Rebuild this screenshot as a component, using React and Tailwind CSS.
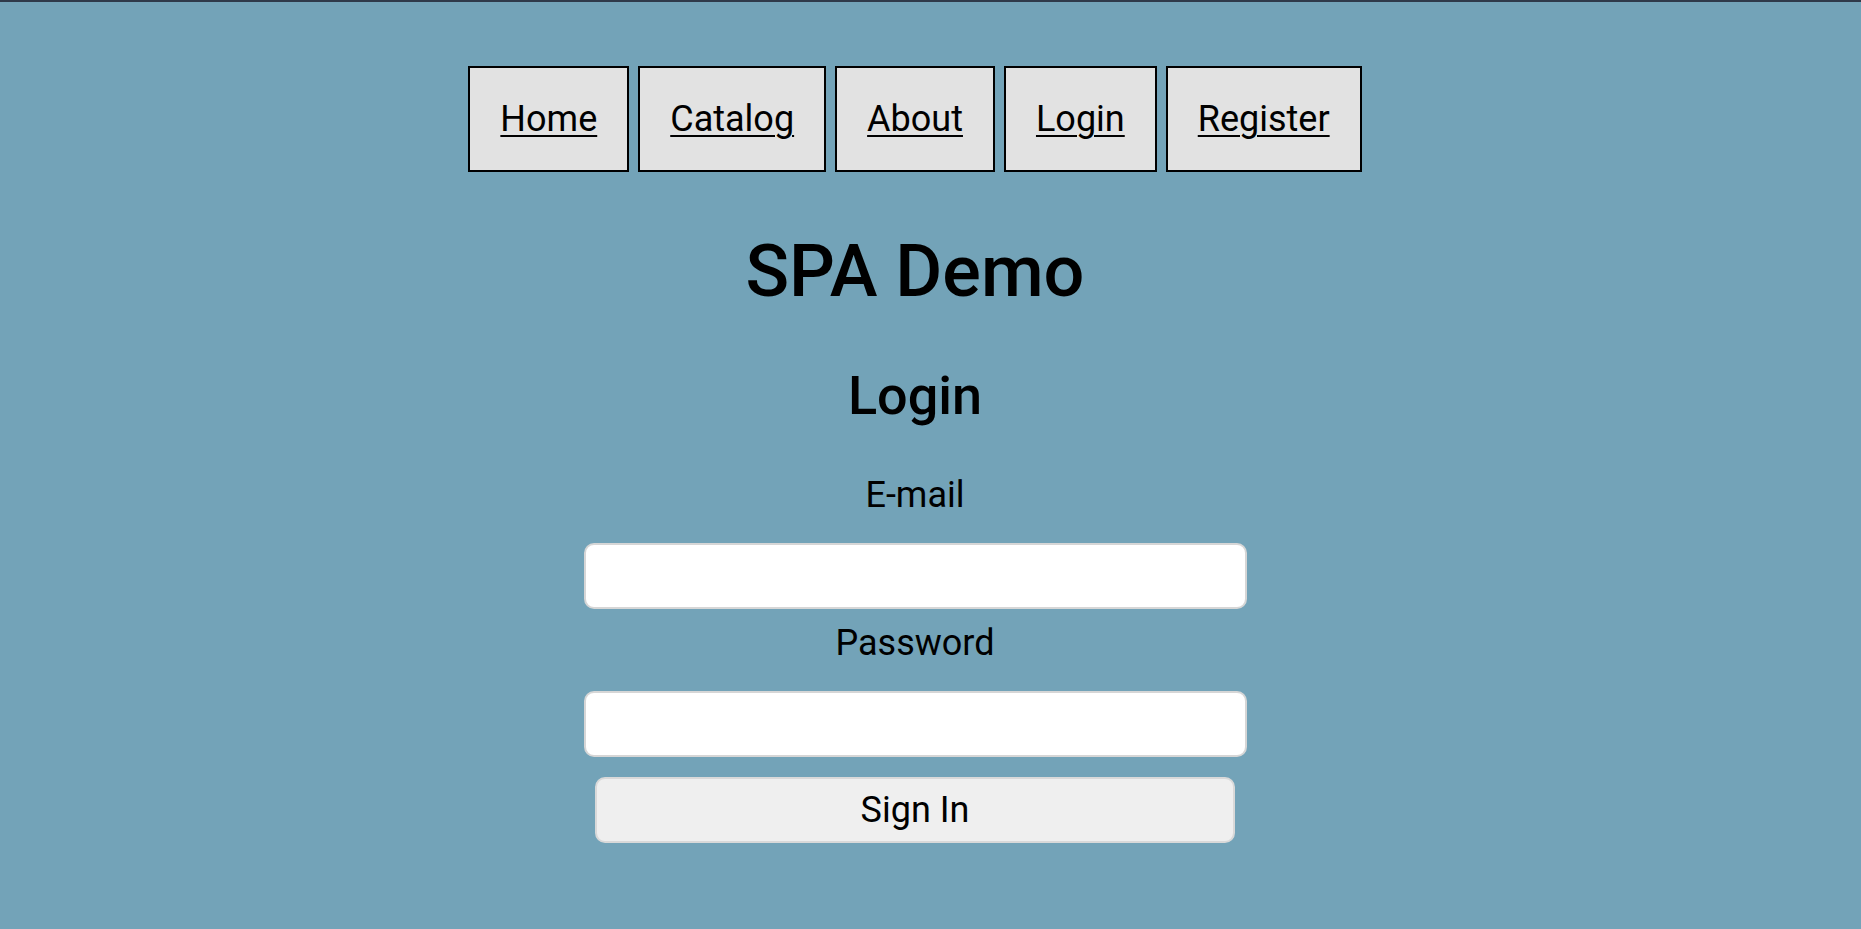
// Login view of the SPA demo: nav strip, title, and the sign-in form.

const NAV_LINKS = ['Home', 'Catalog', 'About', 'Login', 'Register']

function NavBar() {
  return (
    <nav className="mt-[64px] flex gap-[9px]">
      {NAV_LINKS.map(label => (
        <a
          key={label}
          href="#"
          className="block border-2 border-black bg-[#e2e2e2] px-[30px] py-[30px] text-[36px] leading-[42px] text-black underline decoration-2 underline-offset-[4px]"
        >
          {label}
        </a>
      ))}
    </nav>
  )
}

function Field({ label, type, gapTop }) {
  return (
    <>
      <label className={`${gapTop} block text-[36px] leading-[42px] text-black`}>{label}</label>
      <input
        type={type}
        className="mt-[27px] block h-[66px] w-[663px] rounded-[10px] border-2 border-[#d6d6d6] bg-white px-3 text-[36px] outline-none"
      />
    </>
  )
}

export default function App() {
  return (
    <div
      className="min-h-[929px] bg-[#73a3b8] text-black"
      style={{ fontFamily: 'Roboto, "Noto Sans", sans-serif' }}
    >
      <div className="h-[2px] bg-[#2f3a4a]" />
      <div className="flex flex-col items-center pr-[31px]">
        <NavBar />

        <h1 className="mt-[58px] text-[72px] font-medium leading-[84px]">SPA Demo</h1>

        <h2 className="mt-[50px] text-[54px] font-medium leading-[63px]">Login</h2>

        <form className="flex flex-col items-center" onSubmit={e => e.preventDefault()}>
          <Field label="E-mail" type="text" gapTop="mt-[47px]" />
          <Field label="Password" type="password" gapTop="mt-[13px]" />
          <button
            type="submit"
            className="mt-[20px] h-[66px] w-[640px] rounded-[10px] border-2 border-[#d9d9d9] bg-[#efefef] text-[36px] leading-[42px] text-black"
          >
            Sign In
          </button>
        </form>
      </div>
    </div>
  )
}
